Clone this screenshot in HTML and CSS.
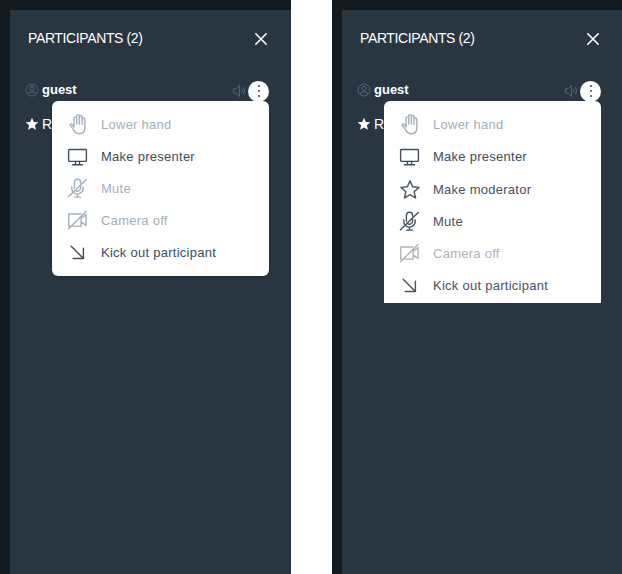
FILE: index.html
```html
<!DOCTYPE html>
<html lang="en">
<head>
<meta charset="utf-8">
<title>Participants</title>
<link rel="stylesheet" href="styles.css">
</head>
<body>
<svg class="defs" aria-hidden="true">
  <symbol id="hand" viewBox="0 0 22 22"><path d="M8 13V5.2a1.35 1.35 0 0 1 2.7 0V11V3a1.35 1.35 0 0 1 2.7 0V11V3.8a1.35 1.35 0 0 1 2.7 0V11.5V6.4a1.35 1.35 0 0 1 2.7 0V14.8c0 3.9-2 6-5.4 6-3 0-4.4-1.2-5.4-3.4L4.3 12.4c-.4-1.3 1.2-2 2-.8L8 14z"/></symbol>
  <symbol id="monitor" viewBox="0 0 22 22"><rect x="2.6" y="4.5" width="17.8" height="11.9" rx=".8"/><path d="M9.5 16.4V19.6M13.5 16.4V19.6M6.5 19.7h10"/></symbol>
  <symbol id="mute" viewBox="0 0 22 22"><path d="M14.6 6V5.4a3.1 3.1 0 0 0-6.2 0v5.8M9.4 13.4a3.1 3.1 0 0 0 5.2-2.2V9M5.8 10v1.5c0 1 .3 2 .8 2.8M8.2 16a5.7 5.7 0 0 0 9-4.5V10M11.5 17.2v2.9M8.5 20.1h6M2.4 19.8L20.3 2.4"/></symbol>
  <symbol id="camera" viewBox="0 0 22 22"><path d="M4.4 17.3H2.7V5h12.2M15.2 9.3l4.8-3.7v10.8l-4.8-3.2M15.2 7.4v9.7H7M2.6 19.8L20 2.4"/></symbol>
  <symbol id="arrow" viewBox="0 0 22 22"><path d="M5.2 5.3l12 12M17.4 7.3v10.2H7.2"/></symbol>
  <symbol id="star" viewBox="0 0 22 22"><path d="M12 2.8l2.6 6 6.4.6-4.9 4.3 1.5 6.3-5.6-3.4L6.4 20l1.5-6.3L3 9.4l6.4-.6z"/></symbol>
  <symbol id="user" viewBox="0 0 14 14"><circle cx="7" cy="7" r="6"/><circle cx="7" cy="5.4" r="2.1"/><path d="M3.6 11.4V10.6q0-1.6 1.8-1.6h3.2q1.8 0 1.8 1.6v.8"/></symbol>
  <symbol id="solid-star" viewBox="0 0 14 14"><path d="M7 .8l1.8 4.1 4.5.4-3.4 3 1 4.4L7 10.4l-3.9 2.3 1-4.4-3.4-3 4.5-.4z"/></symbol>
  <symbol id="speaker" viewBox="0 0 14 14"><path d="M1.6 4.8h2.6L7.6 1.5v11L4.2 9.2H1.6zM9.6 5q1.4 2 0 4M11.4 3.2q2.6 3.8 0 7.6"/></symbol>
  <symbol id="close" viewBox="0 0 14 14"><path d="M1.8 1.8l10.4 10.4M12.2 1.8L1.8 12.2"/></symbol>
</svg>
<main class="comparison">
  <section class="screen">
    <div class="panel">
      <header class="header"><h1 class="title">PARTICIPANTS (2)</h1><svg class="close"><use href="#close"/></svg></header>
      <div class="person">
        <svg class="status"><use href="#user"/></svg><b class="name">guest</b>
        <svg class="speaker"><use href="#speaker"/></svg>
        <span class="more"><i></i><i></i><i></i></span>
        <ul class="menu">
          <li class="item off"><svg><use href="#hand"/></svg>Lower hand</li>
          <li class="item"><svg><use href="#monitor"/></svg>Make presenter</li>
          <li class="item off"><svg><use href="#mute"/></svg>Mute</li>
          <li class="item off"><svg><use href="#camera"/></svg>Camera off</li>
          <li class="item"><svg><use href="#arrow"/></svg>Kick out participant</li>
        </ul>
      </div>
      <div class="person second"><svg class="status solid"><use href="#solid-star"/></svg><span class="name">R</span></div>
    </div>
  </section>
  <section class="screen">
    <div class="panel">
      <header class="header"><h1 class="title">PARTICIPANTS (2)</h1><svg class="close"><use href="#close"/></svg></header>
      <div class="person">
        <svg class="status"><use href="#user"/></svg><b class="name">guest</b>
        <svg class="speaker"><use href="#speaker"/></svg>
        <span class="more"><i></i><i></i><i></i></span>
        <ul class="menu extended">
          <li class="item off"><svg><use href="#hand"/></svg>Lower hand</li>
          <li class="item"><svg><use href="#monitor"/></svg>Make presenter</li>
          <li class="item added first"><svg><use href="#star"/></svg>Make moderator</li>
          <li class="item added"><svg><use href="#mute"/></svg>Mute</li>
          <li class="item added off"><svg><use href="#camera"/></svg>Camera off</li>
          <li class="item added"><svg><use href="#arrow"/></svg>Kick out participant</li>
        </ul>
      </div>
      <div class="person second"><svg class="status solid"><use href="#solid-star"/></svg><span class="name">R</span></div>
    </div>
  </section>
</main>
</body>
</html>
```
FILE: styles.css
```css
* { box-sizing: border-box; }
body { margin: 0; background: #fff; font-family: "Liberation Sans", Arial, sans-serif; overflow: hidden; }
svg { fill: none; stroke: currentColor; flex: none; }
.defs { display: none; }
.comparison { display: flex; gap: 41px; height: 574px; }
.screen { width: 291px; flex: none; padding: 10px 0 0 10px; background: #131a20; }
.panel { height: 564px; background: #293641; color: #fff; }
.header { display: flex; align-items: center; justify-content: space-between; height: 55px; padding: 0 23px 0 18px; }
.title { margin: 1px 0 0; font-size: 14px; font-weight: 400; letter-spacing: -.38px; }
.close { width: 14px; height: 14px; margin-top: 3px; stroke-width: 1.6; stroke-linecap: round; }
.person { position: relative; display: flex; align-items: center; height: 22px; margin-top: 3px; padding: 0 22px 0 15px; }
.header + .person { margin-top: 14px; }
.person.second { margin-top: 12px; }
.status { width: 14px; height: 14px; margin-top: -1px; color: #4e677d; }
.status.solid { margin-top: 0; color: #fff; fill: currentColor; stroke: none; }
.name { margin-left: 3px; font-size: 14px; }
b.name { margin-top: -2px; font-size: 13px; }
.speaker { width: 14px; height: 14px; margin: 2px 2px 0 auto; color: #4e677d; }
.more { display: flex; flex-direction: column; align-items: center; justify-content: center; gap: 3px; width: 21px; height: 21px; margin-top: 2px; border-radius: 50%; background: #fff; }
.more i { width: 2px; height: 2px; border-radius: 50%; background: #32465a; }
.menu { position: absolute; z-index: 1; left: 42px; top: 22px; width: 217px; height: 175px; margin: 0; padding: 7px 14px; list-style: none; border-radius: 6px; background: #fff; box-shadow: 0 1px 3px rgba(0, 0, 0, .3); }
.menu.extended { height: 202px; border-radius: 6px 6px 0 0; box-shadow: none; }
.item { display: flex; align-items: center; height: 32px; color: #3c4e60; font-size: 13px; letter-spacing: .26px; }
.item svg { width: 22px; height: 22px; margin-right: 13px; stroke-width: 1.4; stroke-linejoin: round; stroke-linecap: round; }
.item.off { color: #a4afb9; }
.item.added { color: #48535e; }
.item.added.first { margin-top: 1px; }
.item.added.off { color: #b0b4b7; }
```
